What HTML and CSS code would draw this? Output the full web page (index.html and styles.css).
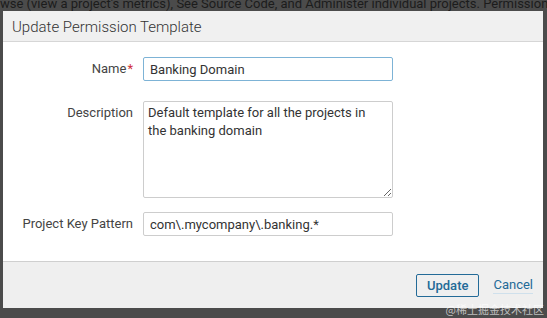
FILE: index.html
```html
<!DOCTYPE html>
<html lang="en">
<head>
  <meta charset="UTF-8">
  <title>Update Permission Template</title>
  <link rel="stylesheet" href="styles.css">
</head>
<body>
  <div class="page-text">wse (view a project's metrics), See Source Code, and Administer individual projects. Permissions can be</div>

  <div class="modal">
    <div class="modal-head">Update Permission Template</div>

    <form class="modal-body">
      <label class="field-label" for="name">Name<em class="required">*</em></label>
      <input class="field-input focused" id="name" type="text" value="Banking Domain">

      <label class="field-label" for="desc">Description</label>
      <textarea class="field-area" id="desc">Default template for all the projects in the banking domain</textarea>

      <label class="field-label" for="pattern">Project Key Pattern</label>
      <input class="field-input" id="pattern" type="text" value="com\.mycompany\.banking.*">
    </form>

    <div class="modal-foot">
      <button class="btn" type="button">Update</button>
      <a href="#" class="link-cancel">Cancel</a>
    </div>
  </div>
  <div class="watermark">@稀土掘金技术社区</div>
</body>
</html>
```

FILE: styles.css
```css
body {
  margin: 0;
  background-color: #4b4b4b;
  font-family: Roboto, "Liberation Sans", sans-serif;
  font-size: 13px;
  color: #444;
  overflow: hidden;
}
.page-text {
  height: 14px;
  margin-top: -3px;
  overflow: hidden;
  white-space: nowrap;
  font-size: 13px;
  line-height: 13px;
  color: #1c1c1c;
}
.modal {
  margin: 0 4px 0 3px;
  width: 540px;
  background-color: #fff;
}
.modal-head {
  height: 29px;
  line-height: 30px;
  padding: 1px 0 0 9px;
  background-color: #f0f0f0;
  border-bottom: 1px solid #d6d6d6;
  font-size: 15px;
  font-weight: 300;
  color: #333;
}
.modal-body {
  display: grid;
  grid-template-columns: 130px 250px;
  column-gap: 10px;
  row-gap: 20px;
  padding: 15px 0 25px;
  margin: 0;
}
.field-label {
  text-align: right;
  padding-top: 4px;
  line-height: 16px;
  color: #444;
}
.required {
  font-style: normal;
  color: #d02f3a;
  margin-left: 1px;
}
.field-input, .field-area {
  box-sizing: border-box;
  width: 250px;
  margin: 0;
  border: 1px solid #cdcdcd;
  border-radius: 2px;
  font-family: Roboto, "Liberation Sans", sans-serif;
  font-size: 13px;
  color: #333;
  background: #fff;
  outline: none;
}
.field-input {
  height: 24px;
  padding: 0 6px;
}
.field-input.focused {
  border-color: #7db3d6;
}
.field-area {
  height: 97px;
  padding: 2px 10px 2px 4px;
  line-height: 18px;
  margin-bottom: -6px;
  resize: both;
}
.modal-foot {
  display: flex;
  justify-content: flex-end;
  align-items: center;
  gap: 14px;
  height: 46px;
  padding-right: 10px;
  background-color: #efefef;
  border-top: 1px solid #cfcfcf;
}
.btn {
  height: 23px;
  padding: 0 10px;
  border: 1px solid #236a97;
  border-radius: 2px;
  background: transparent;
  color: #236a97;
  font-family: Roboto, "Liberation Sans", sans-serif;
  font-size: 13px;
  font-weight: 500;
  cursor: pointer;
}
.link-cancel {
  color: #236a97;
  text-decoration: none;
  border-bottom: 1px solid #cfe0ec;
  line-height: 16px;
}
.watermark {
  position: absolute;
  right: 3px;
  top: 302px;
  font-family: "Noto Sans CJK SC", sans-serif;
  font-size: 11px;
  line-height: 14px;
  color: rgba(255, 255, 255, 0.65);
}
```
